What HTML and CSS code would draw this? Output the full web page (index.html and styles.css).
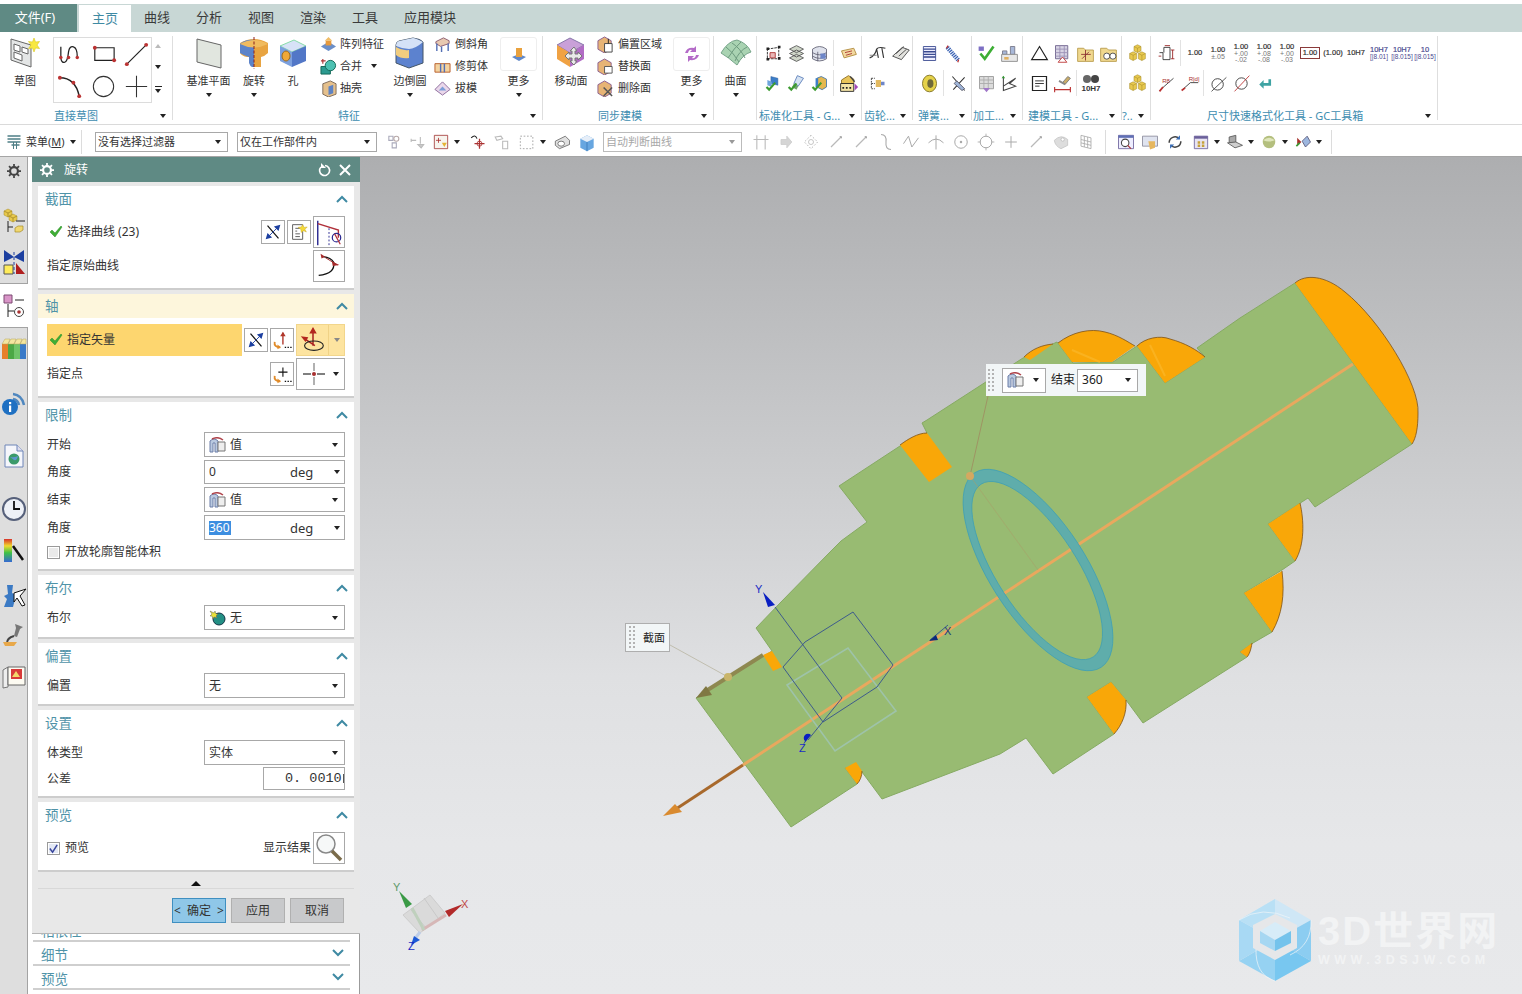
FILE: index.html
```html
<!DOCTYPE html>
<html lang="zh-CN">
<head>
<meta charset="utf-8">
<title>旋转</title>
<link rel="stylesheet" href="styles.css">
</head>
<body>
<svg class="sprite" aria-hidden="true">
<defs>
<symbol id="up" viewBox="0 0 12 8"><path d="M1 7l5-5 5 5" fill="none" stroke="#3f8aa3" stroke-width="2"/></symbol>
<symbol id="down" viewBox="0 0 12 8"><path d="M1 1l5 5 5-5" fill="none" stroke="#3f8aa3" stroke-width="2"/></symbol>
<symbol id="check" viewBox="0 0 14 14"><path d="M1 7l2-2 3 3 6-7 1 1-7 10z" fill="#3fae35" stroke="#2b8c28" stroke-width=".5"/></symbol>
<symbol id="val" viewBox="0 0 18 16"><path d="M1 4q4-4 8 0v11H6V6H4v9H1z" fill="#b9c9e0" stroke="#6c7fa8"/><path d="M9 5h7v9H9z" fill="#eee" stroke="#777"/><path d="M3 2q6-3 11 1" fill="none" stroke="#b0454d" stroke-width="1.5"/></symbol>
<symbol id="rev" viewBox="0 0 24 24"><path d="M6 5l12 14" stroke="#111" stroke-width="1.3"/><path d="M8 16l8-8" stroke="#1c3fa0"/><path d="M20 4l-7 2 5 5zM4 20l7-2-5-5z" fill="#1c3fa0"/></symbol>
<symbol id="sel-tool" viewBox="0 0 24 24"><path d="M5 4h11v16H5z" fill="#fff" stroke="#555"/><path d="M8 8h5M8 11h2M8 14h5M8 17h5" stroke="#555"/><path d="M16 4l1.500 3 3.500-.5-2.500 2.500 1.500 3-3-1.500-2.500 2-.5-3.500-3-2 3.500-.5z" fill="#f4d93a" stroke="#c5a820" stroke-width=".5"/></symbol>
<symbol id="sec-curve" viewBox="0 0 32 32"><path d="M4 4v26" stroke="#27268f" stroke-width="1.5"/><path d="M4 7l22 7v8" fill="none" stroke="#b0303a" stroke-width="1.500"/><path d="M16 12v18" stroke="#27268f" stroke-dasharray="2 2"/><circle cx="24" cy="22" r="4.500" fill="none" stroke="#27268f" stroke-width="1.300"/><path d="M22 18l6 11" stroke="#b0303a" stroke-width="1.300"/></symbol>
<symbol id="orig-curve" viewBox="0 0 32 32"><path d="M5 26q18-2 16-14Q18 7 10 6" fill="none" stroke="#111" stroke-width="1.400"/><path d="M7 3l5 3-4 2zM19 11l8 4-7 1z" fill="#a62a2a"/><path d="M12 7l13 8" stroke="#a62a2a"/></symbol>
<symbol id="vec-infer" viewBox="0 0 24 24"><path d="M13 4v13" stroke="#b0362a" stroke-width="1.500"/><path d="M10 8l3-5 3 5z" fill="#b0362a"/><path d="M4 14q-1 6 6 6" fill="none" stroke="#e08a28" stroke-width="2"/><path d="M7 17l4 3-4 2z" fill="#e08a28"/><path d="M15 20h1.500M18 20h1.500M21 20h1.500" stroke="#111" stroke-width="1.500"/></symbol>
<symbol id="pt-infer" viewBox="0 0 24 24"><path d="M13 5v10M8 10h10" stroke="#111" stroke-width="1.200"/><path d="M4 14q-1 6 6 6" fill="none" stroke="#e08a28" stroke-width="2"/><path d="M7 17l4 3-4 2z" fill="#e08a28"/><path d="M15 20h1.500M18 20h1.500M21 20h1.500" stroke="#111" stroke-width="1.500"/></symbol>
<symbol id="vec" viewBox="0 0 32 32"><path d="M16 4v18M6 14l12 8" stroke="#a81f1f" stroke-width="1.600"/><path d="M12 9l4-7 4 7zM3 12l8 1-3 5z" fill="#b3261e"/><ellipse cx="17" cy="22" rx="10" ry="5" fill="none" stroke="#222" stroke-width="1.200"/></symbol>
<symbol id="point" viewBox="0 0 30 24"><path d="M15 1v8M15 15v8" stroke="#888" stroke-width="1.300"/><path d="M4 12h8M18 12h8" stroke="#555" stroke-width="1.300"/><circle cx="15" cy="12" r="2" fill="#a83030"/></symbol>
<symbol id="boolnone" viewBox="0 0 18 16"><circle cx="10" cy="9" r="6" fill="#238f84" stroke="#134"/><path d="M1 1l4 2 1-2 1 3 2 0-2 2 1 2-3-1-1 2-1-3-2 0 2-2z" fill="#e8e13a" stroke="#665" stroke-width=".5"/></symbol>
<symbol id="mag" viewBox="0 0 30 30"><circle cx="12" cy="11" r="9" fill="#f6f8f8" stroke="#888" stroke-width="1.500"/><path d="M18 18l9 9" stroke="#7a6b4a" stroke-width="3.500"/></symbol>
<symbol id="gear" viewBox="0 0 16 16"><circle cx="8" cy="8" r="4.500" fill="none" stroke="currentColor" stroke-width="2.500"/><path d="M8 0v3M8 13v3M0 8h3M13 8h3M2.300 2.300l2 2M11.700 11.700l2 2M13.700 2.300l-2 2M4.300 11.700l-2 2" stroke="currentColor" stroke-width="2"/></symbol>
<symbol id="ycube" viewBox="0 0 24 24"><g fill="#e8c94e" stroke="#a68c2a" stroke-width=".6"><path d="M8 4l4-2 4 2v5l-4 2-4-2z"/><path d="M3 12l4-2 4 2v6l-4 2-4-2z"/><path d="M13 12l4-2 4 2v6l-4 2-4-2z"/></g><path d="M8 4l4 2 4-2M12 6v5M3 12l4 2 4-2M7 14v6M13 12l4 2 4-2M17 14v6" fill="none" stroke="#a68c2a" stroke-width=".6"/></symbol>
<symbol id="dcheck" viewBox="0 0 24 24"><path d="M9 4l8 2v8l-8-2z" fill="#3c7ec8" stroke="#2b5a96" stroke-width=".5"/><path d="M5 8l5 2v6l-5-2z" fill="#6ea4dc"/><path d="M4 16l3 3 7-8" fill="none" stroke="#3c9b30" stroke-width="2.500"/></symbol>
<symbol id="gray1" viewBox="0 0 24 24"><path d="M7 5h5v5H7zM11 13h5v6h-5z" fill="none" stroke="#aab" stroke-width="1.300"/><circle cx="16" cy="8" r="3" fill="none" stroke="#b7a8a8" stroke-width="1.300"/></symbol>
<symbol id="graytool" viewBox="0 0 24 24"><path d="M6 18L18 6" stroke="#b9b9b9" stroke-width="1.400"/><path d="M16 5l3 0 0 3z" fill="#9a9a9a"/></symbol>
</defs>
</svg>

<div class="tabs">
  <div class="tab-file">文件(F)</div>
  <div class="tab active">主页</div>
  <div class="tab">曲线</div>
  <div class="tab">分析</div>
  <div class="tab">视图</div>
  <div class="tab">渲染</div>
  <div class="tab">工具</div>
  <div class="tab">应用模块</div>
</div>

<div class="ribbon">
  <section class="group g1">
    <div class="gc">
      <div class="big sk"><div class="ic"><svg width="32" height="32" viewBox="0 0 32 32"><path d="M2 2l20 6v22L2 23z" fill="#e4e6e6" stroke="#666"/><path d="M5 7l6 2v6l-6-2zM13 10l6 2v5l-6-2zM5 15l8 3v6l-8-3z" fill="#fff" stroke="#666"/><path d="M25 1l1.500 4 4-.5-2.500 3.500 2.500 3.500-4-.5-1.500 4-1.500-4-4 .5 2.500-3.500-2.500-3.500 4 .5z" fill="#f8e840" stroke="#d9c820" stroke-width=".6"/></svg></div><span>草图</span></div>
      <div class="skbox">
        <svg class="skt" viewBox="0 0 30 30"><path d="M5 7v12q1 5 4 4t4-11q1-6 5-5t4 10" fill="none" stroke="#222" stroke-width="1.300"/><circle cx="5" cy="18" r="1.800" fill="#b33"/><circle cx="13" cy="18" r="1.800" fill="#b33"/><circle cx="22" cy="18" r="1.800" fill="#b33"/></svg>
        <svg class="skt" viewBox="0 0 30 30"><path d="M6 8h20v13H6z" fill="none" stroke="#222" stroke-width="1.200"/><circle cx="6" cy="8" r="2" fill="#b33"/><circle cx="26" cy="21" r="2" fill="#b33"/></svg>
        <svg class="skt" viewBox="0 0 30 30"><path d="M5 25L25 5" stroke="#222" stroke-width="1.200"/><circle cx="5" cy="25" r="2" fill="#b33"/><circle cx="25" cy="5" r="2" fill="#b33"/></svg>
        <svg class="skt" viewBox="0 0 30 30"><path d="M4 6q16 0 20 19" fill="none" stroke="#222" stroke-width="1.500"/><circle cx="4" cy="6" r="2" fill="#b33"/><circle cx="18" cy="11" r="2" fill="#b33"/><circle cx="24" cy="25" r="2" fill="#b33"/></svg>
        <svg class="skt" viewBox="0 0 30 30"><circle cx="15" cy="15" r="10.500" fill="none" stroke="#333" stroke-width="1.100"/></svg>
        <svg class="skt" viewBox="0 0 30 30"><path d="M15 4v22M4 15h22" stroke="#333" stroke-width="1.100"/></svg>
      </div>
      <div class="scr"><i class="tri-up grey"></i><i class="caret"></i><i class="caret lined"></i></div>
    </div>
    <div class="gl"><span>直接草图</span><i class="caret"></i></div>
  </section>

  <section class="group g2">
    <div class="gc">
      <div class="big w47"><div class="ic"><svg width="30" height="32" viewBox="0 0 30 32"><path d="M3 2l24 6v23L3 25z" fill="#e1e6df" stroke="#666"/></svg></div><span>基准平面</span><i class="caret"></i></div>
      <div class="big w44"><div class="ic"><svg width="30" height="32" viewBox="0 0 30 32"><path d="M1 6q14-8 28 0v10q-3 3-7 4v10h-8V20h-6q-5-1-7-4z" fill="#e8a441"/><path d="M1 7q6-5 14-4v27h-2q-2-1-3-4V20q-6-2-9-4z" fill="#5c83c9"/><path d="M1 7q14-8 28 0-14 7-28 0z" fill="#f0bb5f"/><path d="M15 0v32" stroke="#8b1f1f" stroke-dasharray="3 1.500"/></svg></div><span>旋转</span><i class="caret"></i></div>
      <div class="big w34"><div class="ic"><svg width="30" height="30" viewBox="0 0 30 30"><path d="M2 8l14-6 12 6-14 6z" fill="#d7e2f7" stroke="#8da"/><path d="M2 8v15l12 6V14z" fill="#7ca0de"/><path d="M28 8v15l-14 6V14z" fill="#5277c7"/><ellipse cx="8" cy="18" rx="4" ry="5" fill="#f0a838" stroke="#9b6a1e"/></svg></div><span>孔</span></div>
      <div class="lst l1">
        <div class="li"><svg class="s" viewBox="0 0 18 18"><path d="M1 11l8-5 8 5-8 5z" fill="#6b8fc9"/><path d="M6 5h6v5H6z" fill="#e79a3c"/><path d="M9 1l4 4H5z" fill="#f0bd68"/></svg><span>阵列特征</span></div>
        <div class="li"><svg class="s" viewBox="0 0 18 18"><path d="M1 9h10v8H1z" fill="#2b9a90" stroke="#165"/><circle cx="11" cy="8" r="5.500" fill="#4cc1b2" stroke="#165"/><path d="M3 1v5M1 3h5" stroke="#a33" stroke-width="1.200"/></svg><span>合并</span><i class="caret ml6"></i></div>
        <div class="li"><svg class="s" viewBox="0 0 18 18"><path d="M3 4l8-3 6 3v11l-8 3-6-3z" fill="#e5c08c" stroke="#7c6a5a"/><path d="M9 7l5-2v9l-5 2z" fill="#5e83c3"/></svg><span>抽壳</span></div>
      </div>
      <div class="big w36"><div class="ic"><svg width="32" height="32" viewBox="0 0 32 32"><path d="M2 8q0-3 3-4L19 1q8 1 10 4v21l-14 5L2 26z" fill="#5c82cf" stroke="#456"/><path d="M2 9q7 3 13 3t14-7q-8-4-10-4L5 4Q2 5 2 9z" fill="#d5e2f7"/><path d="M2 10q6 4 13 3v8q-8 1-13-3z" fill="#f1cd7f"/></svg></div><span>边倒圆</span><i class="caret"></i></div>
      <div class="lst l2">
        <div class="li"><svg class="s" viewBox="0 0 18 18"><path d="M2 6l8-4 6 3v3l-9 3-5-3z" fill="#e8c9b0" stroke="#8b5b6f"/><path d="M3 8v8M15 8v8M8 11v6" stroke="#5470b5" stroke-width="1.500"/></svg><span>倒斜角</span></div>
        <div class="li"><svg class="s" viewBox="0 0 18 18"><path d="M1 6h16v9H1z" fill="#f3d3a0" stroke="#b85e2a"/><path d="M7 6v9M11 6v9" stroke="#5470b5" stroke-width="1.500"/></svg><span>修剪体</span></div>
        <div class="li"><svg class="s" viewBox="0 0 18 18"><path d="M9 2l8 8-8 6-8-6z" fill="#ead7ea" stroke="#8b6a9c"/><path d="M9 7l4 4H5z" fill="#7d9ed8"/></svg><span>拔模</span></div>
      </div>
      <div class="big w37 more"><div class="ic"><div class="morebox"><svg width="20" height="20" viewBox="0 0 20 20"><path d="M3 13l7-3 7 3-7 4z" fill="#6289c8"/><path d="M7 4h6v9H7z" fill="#e9a13d"/></svg></div></div><span>更多</span><i class="caret"></i></div>
    </div>
    <div class="gl"><span>特征</span><i class="caret"></i></div>
  </section>

  <section class="group g3">
    <div class="gc">
      <div class="big w50"><div class="ic"><svg width="34" height="34" viewBox="0 0 34 34"><path d="M3 9l13-7 14 7-14 8z" fill="#c9a0d8" stroke="#87a"/><path d="M3 9v14l13 8V17z" fill="#f0a243"/><path d="M30 9v14l-14 8V17z" fill="#b26cc5"/><path d="M20 11l3 4h-2v3h3v-2l4 4-4 4v-2h-3v3h2l-3 4-4-4h2v-3h-3v2l-4-4 4-4v2h3v-3h-2z" fill="#e9e9e9" stroke="#777"/></svg></div><span>移动面</span></div>
      <div class="lst l3">
        <div class="li"><svg class="s" viewBox="0 0 18 18"><path d="M1 5l7-4 7 4v9l-7 4-7-4z" fill="#e7b475" stroke="#8a5f8f"/><path d="M8 8h8v9H8z" fill="#fff" stroke="#444"/><path d="M12 8V3" stroke="#222"/></svg><span>偏置区域</span></div>
        <div class="li"><svg class="s" viewBox="0 0 18 18"><path d="M1 5l7-4 7 4v9l-7 4-7-4z" fill="#e7b475" stroke="#8a5f8f"/><path d="M8 9h8v7H8z" fill="#fff" stroke="#555"/></svg><span>替换面</span></div>
        <div class="li"><svg class="s" viewBox="0 0 18 18"><path d="M1 5l7-4 7 4v9l-7 4-7-4z" fill="#e7b475" stroke="#8a5f8f"/><path d="M7 8l9 9M16 8l-9 9" stroke="#555" stroke-width="1.600"/></svg><span>删除面</span></div>
      </div>
      <div class="big w37"><div class="ic"><div class="morebox"><svg width="20" height="20" viewBox="0 0 20 20"><path d="M3 9q2-6 9-5l2-2v6H8l2-2q-3-1-4 3zM17 11q-2 6-9 5l-2 2v-6h6l-2 2q3 1 4-3z" fill="#b46bc8"/></svg></div></div><span>更多</span><i class="caret"></i></div>
    </div>
    <div class="gl"><span>同步建模</span><i class="caret"></i></div>
  </section>

  <section class="group g4">
    <div class="gc"><div class="big w43"><div class="ic"><svg width="32" height="28" viewBox="0 0 32 28"><path d="M1 14q7-12 16-13 10 3 14 12-8 2-14 13Q8 18 1 14z" fill="#a9d3b2" stroke="#77a58a"/><path d="M6 8q7 5 13 15M12 4q8 5 13 15M21 3Q14 9 8 19M27 8q-8 4-12 14" fill="none" stroke="#6d9a7e"/></svg></div><span>曲面</span><i class="caret"></i></div></div>
  </section>

  <section class="group g5">
    <div class="gc">
      <div class="mini">
        <div class="mr"><div class="c"><svg class="i" viewBox="0 0 24 24"><path d="M5 7l13-2v13H5z" fill="none" stroke="#222" stroke-dasharray="3 1"/><path d="M8 11h6v6H8z" fill="#e9b8b8" stroke="#a33"/><path d="M4 5h3v3H4zM17 3h3v3h-3zM4 17h3v3H4zM17 16h3v3h-3z" fill="#222"/></svg></div><div class="c"><svg class="i" viewBox="0 0 24 24"><path d="M4 7l8-4 8 4-8 4zM4 12l8-4 8 4-8 4zM4 17l8-4 8 4-8 4z" fill="#cfd6c8" stroke="#555"/></svg></div><div class="c"><svg class="i" viewBox="0 0 24 24"><path d="M4 7q8-6 16 0v11q-8 5-16 0z" fill="#dfe2ec" stroke="#667"/><path d="M4 11q8 5 16 0M4 15q8 5 16 0M10 10v11" stroke="#667" fill="none"/><path d="M13 12h6v6h-6z" fill="#6d86c9"/></svg></div><i class="sep"></i><div class="c"><svg class="i" viewBox="0 0 24 24"><path d="M4 9l14-3 3 7-14 4z" fill="#f2d8a0" stroke="#b08a3a"/><path d="M8 11l8-2M9 14l7-2" stroke="#a33"/></svg></div></div>
        <div class="mr"><div class="c"><svg class="i"><use href="#dcheck"/></svg></div><div class="c"><svg class="i" viewBox="0 0 24 24"><path d="M13 3l7 3-6 9-5-3z" fill="#d5e2f2" stroke="#5b7fb9"/><path d="M9 12l5 3-2 4-5-3z" fill="#6fa36e"/><path d="M3 16l3 3 6-7" fill="none" stroke="#3c9b30" stroke-width="2.500"/></svg></div><div class="c"><svg class="i" viewBox="0 0 24 24"><path d="M9 6l5-2 6 3v9l-5 3-6-3z" fill="#e5b84f" stroke="#47a"/><path d="M9 6v10" stroke="#3c7ec8" stroke-width="3"/><path d="M4 16l3 3 7-8" fill="none" stroke="#3c9b30" stroke-width="2.500"/></svg></div><i class="sep"></i><div class="c"><svg class="i" viewBox="0 0 24 24"><path d="M4 8l8-5 6 4v5H4z" fill="#e8c45a" stroke="#8a6a1e"/><path d="M3 12h15v9H3z" fill="#f4e4a6" stroke="#222"/><path d="M5 16h2v2H5zM9 16h2v2H9zM13 16h2v2h-2z" fill="#222"/><path d="M19 12l4 4-4 4z" fill="#a447b8"/><path d="M14 4l5 6" stroke="#444" stroke-width="1.500"/></svg></div></div>
      </div>
    </div>
    <div class="gl"><span>标准化工具 - G...</span><i class="caret"></i></div>
  </section>

  <section class="group g6">
    <div class="gc">
      <div class="mini">
        <div class="mr"><div class="c"><svg class="i" viewBox="0 0 24 24"><path d="M3 17q6-2 8-10 2-3 10-1M11 7l2 10M17 6l2 11" fill="none" stroke="#333" stroke-width="1.300"/><path d="M3 14h8" stroke="#777"/></svg></div><div class="c"><svg class="i" viewBox="0 0 24 24"><path d="M3 15L14 5l8 3-9 11z" fill="#e3e3df" stroke="#444"/><path d="M7 12l9-8M10 15l9-8" stroke="#444"/></svg></div></div>
        <div class="mr"><div class="c"><svg class="i" viewBox="0 0 24 24"><path d="M5 6h4M5 12h4M5 18h4M5 6v12" stroke="#333" stroke-dasharray="2 1"/><path d="M10 8h6v8h-6z" fill="#e2b960"/><path d="M16 10h4v4h-4z" fill="#6d86c9"/></svg></div></div>
      </div>
    </div>
    <div class="gl"><span>齿轮...</span><i class="caret"></i></div>
  </section>

  <section class="group g7">
    <div class="gc">
      <div class="mini">
        <div class="mr"><div class="c"><svg class="i" viewBox="0 0 24 24"><path d="M5 4h14v16H5z" fill="#eef" stroke="#3a4a90"/><path d="M5 7h14M5 10h14M5 13h14M5 16h14" stroke="#3a4a90" stroke-width="1.500"/></svg></div><div class="c"><svg class="i" viewBox="0 0 24 24"><path d="M6 5l13 15" stroke="#3a63b5" stroke-width="5" stroke-dasharray="1.500 1"/><path d="M5 6l2-3M19 19l-1 3" stroke="#b33" stroke-width="1.500"/></svg></div></div>
        <div class="mr"><div class="c"><svg class="i" viewBox="0 0 24 24"><ellipse cx="12" cy="12" rx="8" ry="9.500" fill="#e5d24a" stroke="#7c6d20"/><ellipse cx="13" cy="12" rx="3.500" ry="5" fill="#6f6a3a"/></svg></div><i class="sep"></i><div class="c"><svg class="i" viewBox="0 0 24 24"><path d="M5 4l14 16M19 5L6 19" stroke="#333" stroke-width="1.200"/><path d="M10 9l9 9-3 2-9-8z" fill="#9fb5d8" stroke="#556"/></svg></div></div>
      </div>
    </div>
    <div class="gl"><span>弹簧...</span><i class="caret"></i></div>
  </section>

  <section class="group g8">
    <div class="gc">
      <div class="mini">
        <div class="mr"><div class="c"><svg class="i" viewBox="0 0 24 24"><path d="M3 4h6v5H3z" fill="#7d6fc4"/><path d="M5 12l5 6 10-14" fill="none" stroke="#3dae35" stroke-width="3"/></svg></div><div class="c"><svg class="i" viewBox="0 0 24 24"><path d="M4 9h5v4H4zM13 4h5v9h-5z" fill="#a8b8d8" stroke="#778"/><path d="M3 13h18v8H3z" fill="#e8e8e8" stroke="#888"/><path d="M6 16h5v3H6z" fill="#e0b060"/></svg></div></div>
        <div class="mr"><div class="c"><svg class="i" viewBox="0 0 24 24"><path d="M4 4h16v14H4z" fill="#dcdcdc" stroke="#999"/><path d="M4 8h16M4 12h16M9 4v14M14 4v14" stroke="#aaa"/><path d="M12 22l-4-5h8z" fill="#a077c8"/></svg></div><div class="c"><svg class="i" viewBox="0 0 24 24"><path d="M5 4v16l14-5-7-3 7-6-14 9" fill="none" stroke="#444" stroke-width="1.200"/><path d="M3 6l2-3 2 3" fill="#393"/></svg></div></div>
      </div>
    </div>
    <div class="gl"><span>加工...</span><i class="caret"></i></div>
  </section>

  <section class="group g9">
    <div class="gc">
      <div class="mini">
        <div class="mr"><div class="c"><svg class="i" viewBox="0 0 24 24"><path d="M12 4l9 15H3z" fill="none" stroke="#222" stroke-width="1.300"/></svg></div><div class="c"><svg class="i" viewBox="0 0 24 24"><path d="M4 3h14v15H4z" fill="#d8d4e4" stroke="#6a5f8a"/><path d="M4 7h14M4 11h14M4 15h14M9 3v15M14 3v15" stroke="#9a90b5"/><path d="M12 16l5 6H7z" fill="#fff" stroke="#b33"/></svg></div><div class="c"><svg class="i" viewBox="0 0 24 24"><path d="M3 6h7l2 2h9v13H3z" fill="#f0d88e" stroke="#b79a4a"/><path d="M12 8v12M7 13h11M8 18l8-8" stroke="#8a3030"/></svg></div><div class="c"><svg class="i" viewBox="0 0 24 24"><path d="M3 6h7l2 2h9v13H3z" fill="#f0d88e" stroke="#b79a4a"/><circle cx="10" cy="15" r="3.500" fill="#fff" stroke="#444"/><circle cx="17" cy="15" r="3.500" fill="#fff" stroke="#444"/></svg></div></div>
        <div class="mr"><div class="c"><svg class="i" viewBox="0 0 24 24"><path d="M4 4h16v16H4z" fill="#fff" stroke="#222" stroke-width="1.400"/><path d="M7 9h10M7 12h10M7 15h5" stroke="#222"/></svg></div><div class="c"><svg class="i" viewBox="0 0 24 24"><path d="M12 11l6-7 3 2-6 7z" fill="#c9ac68" stroke="#777"/><path d="M8 9l7 4" stroke="#888" stroke-width="2"/><path d="M3 19h18M3 16v6M21 16v6" stroke="#b33" stroke-width="1.300"/></svg></div><i class="sep"></i><div class="c col"><svg class="tiny" viewBox="0 0 18 10"><circle cx="5" cy="5" r="4" fill="#666"/><circle cx="13" cy="5" r="4" fill="#444"/></svg><b class="t10h7">10H7</b></div></div>
      </div>
    </div>
    <div class="gl"><span>建模工具 - G...</span><i class="caret"></i></div>
  </section>

  <section class="group g10">
    <div class="gc"><div class="mini"><div class="mr"><div class="c"><svg class="i"><use href="#ycube"/></svg></div></div><div class="mr"><div class="c"><svg class="i"><use href="#ycube"/></svg></div></div></div></div>
    <div class="gl"><span>?..</span><i class="caret"></i></div>
  </section>

  <section class="group g11">
    <div class="gc">
      <div class="mini">
        <div class="mr">
          <div class="c"><svg class="i" viewBox="0 0 24 24"><path d="M9 11V5h7v14H8v-8H4" fill="none" stroke="#333"/><path d="M19 8v10M17 8h4M17 18h4M10 3h6M3 15h3" stroke="#922" fill="none"/></svg></div><i class="sep"></i>
          <div class="c"><span class="dm">1.00</span></div>
          <div class="c"><span class="dm">1.00<small>±.05</small></span></div>
          <div class="c"><span class="dm">1.00<small>+.00<br>-.02</small></span></div>
          <div class="c"><span class="dm">1.00<small>+.08<br>-.08</small></span></div>
          <div class="c"><span class="dm">1.00<small>+.00<br>-.03</small></span></div>
          <div class="c"><span class="dm boxed">1.00</span></div>
          <div class="c"><span class="dm">(1.00)</span></div>
          <div class="c"><span class="dm">10H7</span></div>
          <div class="c"><span class="dm bl">10H7<small>[|8.01]</small></span></div>
          <div class="c"><span class="dm bl">10H7<small>[|8.015]</small></span></div>
          <div class="c"><span class="dm bl">10<small>[|8.015]</small></span></div>
        </div>
        <div class="mr">
          <div class="c"><svg class="i" viewBox="0 0 24 24"><path d="M4 20L20 6" stroke="#333"/><path d="M4 21l4-5" stroke="#b33" stroke-width="2"/><text x="7" y="11" class="ictx">R8</text></svg></div>
          <div class="c"><svg class="i" viewBox="0 0 24 24"><path d="M4 19L13 11h9" fill="none" stroke="#333"/><path d="M3 20l4-3" stroke="#b33" stroke-width="2"/><text x="11" y="9" class="ictx">R|d|</text></svg></div><i class="sep"></i>
          <div class="c"><svg class="i" viewBox="0 0 24 24"><circle cx="11" cy="13" r="6.500" fill="none" stroke="#333"/><path d="M4 21L21 5" stroke="#444"/></svg></div>
          <div class="c"><svg class="i" viewBox="0 0 24 24"><circle cx="12" cy="12" r="6.500" fill="none" stroke="#333"/><path d="M4 21L21 3" stroke="#b33"/></svg></div>
          <div class="c"><svg class="i" viewBox="0 0 24 24"><path d="M18 7v6H9" fill="none" stroke="#3fa3a3" stroke-width="3"/><path d="M11 8l-5 5 5 5z" fill="#3fa3a3"/></svg></div>
        </div>
      </div>
    </div>
    <div class="gl"><span>尺寸快速格式化工具 - GC工具箱</span><i class="caret"></i></div>
  </section>
  <div class="ribbon-rest"></div>
</div>

<div class="toolbar">
  <div class="menu"><svg class="mi" viewBox="0 0 16 16"><path d="M1 2h13M1 5h13M1 8h13M5 11h8" stroke="#4f7f86" stroke-width="1.500"/><path d="M7 8v7M10 8v7" stroke="#4f7f86"/></svg><span>菜单(<u>M</u>)</span><i class="caret"></i></div>
  <i class="tsep"></i>
  <div class="tsel w133"><span>没有选择过滤器</span><i class="caret"></i></div>
  <div class="tsel w140"><span>仅在工作部件内</span><i class="caret"></i></div>
  <div class="t ml4"><svg class="tic"><use href="#gray1"/></svg></div>
  <div class="t"><svg class="tic" viewBox="0 0 24 24"><path d="M5 10h6M5 8v4M16 6v8M13 15h7l-3 4z" fill="#c9c9c9" stroke="#bbb" stroke-width="1.300"/></svg></div>
  <div class="t"><svg class="tic" viewBox="0 0 24 24"><path d="M4 4h16v16H4z" fill="#f7f4ee" stroke="#a53a3a"/><path d="M9 7v6M6 10h6" stroke="#a33"/><path d="M13 13h6l-3 5z" fill="#e5b335"/></svg></div><i class="tc"><i class="caret"></i></i>
  <div class="t ml4"><svg class="tic" viewBox="0 0 24 24"><path d="M5 7q5-5 7 1" fill="none" stroke="#222" stroke-width="1.300"/><path d="M15 8v12M9 14h12" stroke="#a33" stroke-width="1.500"/><circle cx="15" cy="14" r="3" fill="none" stroke="#a33"/></svg></div>
  <div class="t"><svg class="tic" viewBox="0 0 24 24"><path d="M5 6l7-1 2 3-7 2zM14 11h6v9h-6z" fill="none" stroke="#bbb" stroke-width="1.300"/></svg></div>
  <div class="t ml2"><svg class="tic" viewBox="0 0 24 24"><path d="M4 5h15v15H4z" fill="none" stroke="#999" stroke-dasharray="2 2"/></svg></div><i class="tc"><i class="caret"></i></i>
  <div class="t ml3"><svg class="tic" viewBox="0 0 24 24"><path d="M4 11l12-6 5 5v5L9 20l-5-4z" fill="#e0e0e0" stroke="#666"/><ellipse cx="11" cy="14" rx="4" ry="3" fill="#fff" stroke="#666"/></svg></div>
  <div class="t ml1"><svg class="tic" viewBox="0 0 24 24"><path d="M4 8l8-4 8 4v11l-8 4-8-4z" fill="#67a6e0"/><path d="M4 8l8-4 8 4-8 4z" fill="#e6eef8"/><path d="M12 12v11" stroke="#3b78b8"/></svg></div>
  <div class="tsel w139 dis ml4"><span>自动判断曲线</span><i class="caret"></i></div>
  <div class="ts25 first"><svg class="tic" viewBox="0 0 24 24"><path d="M7 4v17M17 4v17M3 9h18" stroke="#bbb" stroke-width="1.300"/></svg></div>
  <div class="ts25"><svg class="tic" viewBox="0 0 24 24"><path d="M6 9h7V5l6 7-6 7v-4H6z" fill="#d5d5d5" stroke="#ccc"/></svg></div>
  <div class="ts25"><svg class="tic" viewBox="0 0 24 24"><path d="M12 4l-8 8 8 8 8-8z" fill="none" stroke="#aaa" stroke-dasharray="2 2"/><circle cx="12" cy="12" r="3" fill="none" stroke="#bbb"/></svg></div>
  <div class="ts25"><svg class="tic"><use href="#graytool"/></svg></div>
  <div class="ts25"><svg class="tic"><use href="#graytool"/></svg></div>
  <div class="ts25"><svg class="tic" viewBox="0 0 24 24"><path d="M6 3q7 0 6 9t6 9" fill="none" stroke="#aaa" stroke-width="1.300"/></svg></div>
  <div class="ts25"><svg class="tic" viewBox="0 0 24 24"><path d="M3 14l6-9 4 13 8-11" fill="none" stroke="#aaa" stroke-width="1.200"/></svg></div>
  <div class="ts25"><svg class="tic" viewBox="0 0 24 24"><path d="M12 4v17M3 13q9-9 18 0" fill="none" stroke="#aaa" stroke-width="1.200"/></svg></div>
  <div class="ts25"><svg class="tic" viewBox="0 0 24 24"><circle cx="12" cy="12" r="7.500" fill="none" stroke="#aaa" stroke-width="1.200"/><circle cx="12" cy="12" r="1.500" fill="#aaa"/></svg></div>
  <div class="ts25"><svg class="tic" viewBox="0 0 24 24"><circle cx="12" cy="12" r="7" fill="none" stroke="#aaa" stroke-width="1.200"/><path d="M12 2v4M12 18v4M2 12h4M18 12h4" stroke="#aaa"/></svg></div>
  <div class="ts25"><svg class="tic" viewBox="0 0 24 24"><path d="M12 5v14M5 12h14" stroke="#aaa" stroke-width="1.200"/></svg></div>
  <div class="ts25"><svg class="tic"><use href="#graytool"/></svg></div>
  <div class="ts25"><svg class="tic" viewBox="0 0 24 24"><path d="M4 10q8-8 16-1v7l-8 4q-7-3-8-10z" fill="#ddd" stroke="#c5c5c5"/><circle cx="14" cy="9" r="2" fill="#fff" stroke="#bbb"/></svg></div>
  <div class="ts25"><svg class="tic" viewBox="0 0 24 24"><path d="M6 4l12 3v13L6 17zM6 9l12 3M6 13l12 3M10 5v13M14 6v13" fill="none" stroke="#aaa"/></svg></div>
  <i class="tsep ml6"></i>
  <div class="t ml8"><svg class="tic" viewBox="0 0 24 24"><path d="M3 4h18v16H3z" fill="#eef" stroke="#6a5f9a"/><path d="M3 4h18v3H3z" fill="#5f6fb5"/><circle cx="11" cy="13" r="4.500" fill="#fff" stroke="#444" stroke-width="1.300"/><path d="M14 16l4 4" stroke="#a33" stroke-width="1.500"/></svg></div>
  <div class="t"><svg class="tic" viewBox="0 0 24 24"><path d="M3 5h18v12H3z" fill="#dfe3ef" stroke="#889"/><path d="M10 11l8 0v8l-6 2z" fill="#e6b760"/></svg></div>
  <div class="t ml1"><svg class="tic" viewBox="0 0 24 24"><path d="M5 13a7 7 0 0 1 12-5M19 11a7 7 0 0 1-12 5" fill="none" stroke="#444" stroke-width="1.800"/><path d="M18 4v5h-5z" fill="#3d70b8"/><path d="M6 20v-5h5z" fill="#3d70b8"/></svg></div>
  <div class="t ml2"><svg class="tic" viewBox="0 0 24 24"><path d="M4 5h16v15H4z" fill="#e8e4f2" stroke="#6a5f9a"/><path d="M4 5h16v3H4z" fill="#6a5f9a"/><path d="M8 11h3v3H8zM13 11h3v3h-3zM8 15h3v3H8zM13 15h3v3h-3z" fill="#c6a13a"/></svg></div><i class="tc"><i class="caret"></i></i>
  <div class="t ml2"><svg class="tic" viewBox="0 0 24 24"><path d="M5 6l8-2v9H5z" fill="#a9a9a9" stroke="#555"/><path d="M3 13l10-1 8 4-9 3z" fill="#cfcfcf" stroke="#555"/></svg></div><i class="tc"><i class="caret"></i></i>
  <div class="t ml2"><svg class="tic" viewBox="0 0 24 24"><circle cx="12" cy="12" r="7.500" fill="#b4bf7e"/><path d="M5 10q7-6 14 0-7 3-14 0z" fill="#dfe6bb"/></svg></div><i class="tc"><i class="caret"></i></i>
  <div class="t ml2"><svg class="tic" viewBox="0 0 24 24"><path d="M5 7l5 5-5 5z" fill="#a6302a"/><path d="M11 11l6-6 4 7-6 6z" fill="#9db6de" stroke="#557"/><path d="M4 17l4-4" stroke="#3a9b35" stroke-width="2"/></svg></div><i class="tc"><i class="caret"></i></i>
  <i class="tsep ml8"></i>
</div>

<div class="main">
  <nav class="rail">
    <div class="ri"><svg class="ri-gear"><use href="#gear"/></svg></div>
    <div class="ri"><svg class="ri-ic" viewBox="0 0 26 26"><path d="M3 4l4-2 4 2-4 2zM3 4v4l4 2V6zM11 4v4l-4 2V6zM8 9l4-2 4 2-4 2zM8 9v4l4 2v-4zM16 9v4l-4 2v-4z" fill="#e8c94e" stroke="#a68c2a" stroke-width=".5"/><path d="M7 14v11M7 20h5M15 14h9" stroke="#222"/><path d="M14 21l3-2 5 0 0 4-3 2h-5z" fill="#f0d770" stroke="#a68c2a" stroke-width=".7"/></svg></div>
    <div class="ri"><svg class="ri-ic" viewBox="0 0 26 26"><path d="M3 1l10 7 10-7v12l-10-5-10 5z" fill="#1c3fa0"/><path d="M13 3v22" stroke="#1c3fa0" stroke-dasharray="3 2"/><path d="M3 16h9v9H3z" fill="#ffec5a" stroke="#555"/><path d="M15 14l9 11h-9z" fill="#b01e1e"/></svg></div>
    <div class="ri on"><svg class="ri-ic" viewBox="0 0 26 26"><path d="M3 2h8v8H3z" fill="#d995c8" stroke="#7c4a72"/><path d="M7 11v13M7 18h6M14 7h9" stroke="#222"/><circle cx="18" cy="19" r="4.500" fill="none" stroke="#444"/><circle cx="18" cy="19" r="1.800" fill="#a33"/></svg></div>
    <div class="ri"><svg class="ri-ic" viewBox="0 0 26 26"><path d="M1 9h6v15H1z" fill="#e6802a"/><path d="M7 9h6v15H7z" fill="#4ba846"/><path d="M13 9h6v15h-6z" fill="#6fc46a"/><path d="M19 9h6v15h-6z" fill="#3a7ac8"/><path d="M1 9l3-5h5l-2 5zM7 9l3-5h5l-2 5zM13 9l3-5h5l-2 5zM19 9l3-5h3v5z" fill="#f3e6a0" stroke="#b7a55a" stroke-width=".5"/></svg></div>
    <div class="ri"><svg class="ri-ic" viewBox="0 0 26 26"><path d="M12 4q9 1 11 11M12 9q5 1 6 6" fill="none" stroke="#4f87bf" stroke-width="2.500"/><circle cx="9" cy="17" r="8" fill="#1f70c2"/><rect x="8" y="15.500" width="2.200" height="6.500" fill="#fff"/><rect x="8" y="12" width="2.200" height="2.200" fill="#fff"/></svg></div>
    <div class="ri"><svg class="ri-ic" viewBox="0 0 26 26"><path d="M4 2h12l6 6v16H4z" fill="#f5f6fb" stroke="#6f86b8"/><path d="M16 2v6h6" fill="#dde" stroke="#6f86b8"/><circle cx="13" cy="16" r="5.500" fill="#3a9a6a"/><path d="M9 14q4 1 8-1-1 5-4 4z" fill="#5d96cf"/></svg></div>
    <div class="ri"><svg class="ri-ic" viewBox="0 0 26 26"><circle cx="13" cy="13" r="11" fill="#eef1f7" stroke="#56607a" stroke-width="2"/><path d="M13 5v8h6" fill="none" stroke="#111" stroke-width="1.800"/></svg></div>
    <div class="ri"><svg class="ri-ic" viewBox="0 0 26 26"><defs><linearGradient id="spec" x1="0" y1="0" x2="0" y2="1"><stop offset="0" stop-color="#d8322a"/><stop offset=".3" stop-color="#f0d92e"/><stop offset=".6" stop-color="#3ec246"/><stop offset="1" stop-color="#3568d4"/></linearGradient></defs><rect x="3" y="1" width="8" height="23" fill="url(#spec)"/><path d="M12 8l10 14" stroke="#111" stroke-width="2.500"/></svg></div>
    <div class="ri"><svg class="ri-ic" viewBox="0 0 26 26"><path d="M6 1h6l-1 8 4 2-3 12H3l3-8-3-3 4-2z" fill="#3b7ac4"/><path d="M13 9l12-4-6 7 5 9-3 1-5-8-3 4z" fill="#fff" stroke="#111"/></svg></div>
    <div class="ri"><svg class="ri-ic" viewBox="0 0 26 26"><path d="M14 2l8 3-3 2-3 8-3-1 2-8z" fill="#777"/><path d="M13 14q-7 2-7 7" fill="none" stroke="#444" stroke-width="2"/><path d="M2 20h14l-3 4H4z" fill="#e8a84a"/></svg></div>
    <div class="ri"><svg class="ri-ic" viewBox="0 0 26 26"><path d="M2 6l5-3v20l-5 1z" fill="#eee" stroke="#777"/><path d="M7 3h17v18H7z" fill="#fdfbf2" stroke="#666"/><path d="M10 5h11v10H10z" fill="#d83a3a"/><path d="M15 7l4 6h-8z" fill="#f3d86a"/></svg></div>
  </nav>

  <aside class="panel">
    <div class="under"><span class="ut">相依性</span></div>
    <div class="under"><span class="ut">细节</span><svg class="chev cd"><use href="#down"/></svg></div>
    <div class="under"><span class="ut">预览</span><svg class="chev cd"><use href="#down"/></svg></div>

    <div class="dialog">
      <header class="dh"><svg class="dh-gear"><use href="#gear"/></svg><span class="dh-t">旋转</span><svg class="dh-b" viewBox="0 0 14 14"><path d="M3 4a5 5 0 1 0 4-1.500" fill="none" stroke="#fff" stroke-width="1.600"/><path d="M3 0v5h5" fill="#fff"/></svg><svg class="dh-b" viewBox="0 0 14 14"><path d="M2 2l10 10M12 2L2 12" stroke="#fff" stroke-width="2"/></svg></header>
      <div class="dbody">
        <section class="sec">
          <div class="sh"><span>截面</span><svg class="chev"><use href="#up"/></svg></div>
          <div class="sb">
            <div class="row r32"><svg class="chk"><use href="#check"/></svg><span class="lb">选择曲线 (23)</span><span class="sp"></span><span class="btn b24"><svg class="bi"><use href="#rev"/></svg></span><span class="btn b24 ml2"><svg class="bi"><use href="#sel-tool"/></svg></span><span class="btn b32 ml2"><svg class="bb"><use href="#sec-curve"/></svg></span></div>
            <div class="row r32 mt2"><span class="lb">指定原始曲线</span><span class="sp"></span><span class="btn b32"><svg class="bb"><use href="#orig-curve"/></svg></span></div>
          </div>
        </section>
        <section class="sec">
          <div class="sh act"><span>轴</span><svg class="chev"><use href="#up"/></svg></div>
          <div class="sb">
            <div class="row r32"><div class="hl"><svg class="chk"><use href="#check"/></svg><span class="lb">指定矢量</span></div><span class="sp"></span><span class="btn b24"><svg class="bi"><use href="#rev"/></svg></span><span class="btn b24 ml2"><svg class="bi"><use href="#vec-infer"/></svg></span><span class="btn-sel ml2"><span class="bs-m"><svg class="bb"><use href="#vec"/></svg></span><span class="bs-c"><i class="caret gr"></i></span></span></div>
            <div class="row r32 mt2"><span class="lb">指定点</span><span class="sp"></span><span class="btn b24"><svg class="bi"><use href="#pt-infer"/></svg></span><span class="btn b49 ml2"><svg class="bp"><use href="#point"/></svg><i class="caret"></i></span></div>
          </div>
        </section>
        <section class="sec pb8">
          <div class="sh"><span>限制</span><svg class="chev"><use href="#up"/></svg></div>
          <div class="sb">
            <div class="row r25"><span class="lb">开始</span><span class="sp"></span><div class="sel"><svg class="vi"><use href="#val"/></svg><span>值</span><i class="caret"></i></div></div>
            <div class="row r24 mt3"><span class="lb">角度</span><span class="sp"></span><div class="sel num"><span class="n">0</span><span class="u">deg</span><i class="caret"></i></div></div>
            <div class="row r25 mt3"><span class="lb">结束</span><span class="sp"></span><div class="sel"><svg class="vi"><use href="#val"/></svg><span>值</span><i class="caret"></i></div></div>
            <div class="row r25 mt3"><span class="lb">角度</span><span class="sp"></span><div class="sel num"><span class="n hi">360</span><span class="u">deg</span><i class="caret"></i></div></div>
            <div class="row r18 mt3"><i class="cb"></i><span class="lb">开放轮廓智能体积</span></div>
          </div>
        </section>
        <section class="sec pb9">
          <div class="sh"><span>布尔</span><svg class="chev"><use href="#up"/></svg></div>
          <div class="sb">
            <div class="row r25"><span class="lb">布尔</span><span class="sp"></span><div class="sel"><svg class="vi"><use href="#boolnone"/></svg><span>无</span><i class="caret"></i></div></div>
          </div>
        </section>
        <section class="sec">
          <div class="sh"><span>偏置</span><svg class="chev"><use href="#up"/></svg></div>
          <div class="sb">
            <div class="row r25"><span class="lb">偏置</span><span class="sp"></span><div class="sel"><span>无</span><i class="caret"></i></div></div>
          </div>
        </section>
        <section class="sec">
          <div class="sh"><span>设置</span><svg class="chev"><use href="#up"/></svg></div>
          <div class="sb">
            <div class="row r25"><span class="lb">体类型</span><span class="sp"></span><div class="sel"><span>实体</span><i class="caret"></i></div></div>
            <div class="row r23 mt2"><span class="lb">公差</span><span class="sp"></span><div class="tol"><span class="tolv">0. 0010</span></div></div>
          </div>
        </section>
        <section class="sec">
          <div class="sh"><span>预览</span><svg class="chev"><use href="#up"/></svg></div>
          <div class="sb">
            <div class="row r32"><i class="cb on"><svg viewBox="0 0 12 12"><path d="M2 6l3 4 5-8" fill="none" stroke="#38459c" stroke-width="1.600"/></svg></i><span class="lb">预览</span><span class="sp"></span><span class="lb">显示结果</span><span class="btn b32 ml2"><svg class="bb"><use href="#mag"/></svg></span></div>
          </div>
        </section>
        <div class="collapse"><i class="tri-up"></i></div>
        <div class="acts"><button class="pb ok">&lt; 确定 &gt;</button><button class="pb">应用</button><button class="pb">取消</button></div>
      </div>
    </div>
  </aside>

  <div class="viewport">
    <svg class="scene" viewBox="360 157 1162 837" width="1162" height="837">
      <polygon fill="#98bb72" stroke="#86aa63" stroke-width="1" points="696,698 772,651 756,628 780,603 830,552 841,541 867,522 839,486 900,446 927,433 922,423 927,420 1023,358 1057,342 1073,363 1113,362 1137,346 1165,383 1205,357 1197,348 1240,318 1295,283 1412,444 1315,507 1308,498 1268,524 1295,561 1282,570 1244,593 1272,632 1253,643 1240,652 1247,657 1143,723 1126,700 1111,682 1087,697 1114,734 1053,774 1026,738 1000,754 882,799 862,772 845,768 857,784 791,827"/>
      <g fill="#f9a708">
        <path d="M1295,283C1305,274 1325,275 1345,292C1380,320 1420,385 1418,413C1418,428 1416,438 1412,444Z" fill="#fca805"/>
        <path d="M1058,343C1072,332 1090,328 1105,332C1118,335 1128,342 1135,346L1112,362L1072,362Z"/>
        <path d="M1137,346C1145,338 1160,335 1170,339C1185,343 1197,350 1205,357L1165,383Z"/>
        <path d="M1024,357C1032,349 1042,345 1053,344L1030,360Z"/>
        <path d="M900,445C908,439 918,433 927,433L952,467L929,482Z"/>
        <path d="M763,655L772,651L782,667L773,671Z"/>
        <path d="M1268,524L1300,503C1304,520 1305,545 1295,561Z"/>
        <path d="M1244,593L1282,571C1285,595 1282,615 1272,632Z"/>
        <path d="M1240,652L1252,643C1251,650 1249,655 1247,657Z"/>
        <path d="M1087,697L1111,682L1126,700C1127,713 1122,725 1114,734Z"/>
        <path d="M845,768L856,762L862,771C862,776 860,781 857,784Z"/>
      </g>
      <path fill="none" stroke="#7d5216" stroke-width=".8" d="M1295,283C1305,274 1325,275 1345,292C1380,320 1420,385 1418,413C1418,428 1416,438 1412,444M1058,343C1072,332 1090,328 1105,332C1118,335 1128,342 1135,346M1137,346C1145,338 1160,335 1170,339C1185,343 1197,350 1205,357M1024,357C1032,349 1042,345 1053,344M900,445C908,439 918,433 927,433M1300,503C1304,520 1305,545 1295,561M1282,571C1285,595 1282,615 1272,632M1252,643C1251,650 1249,655 1247,657M1126,700C1127,713 1122,725 1114,734M862,771C862,776 860,781 857,784"/>
      <path d="M1072,350L1100,362M1150,345L1165,376" stroke="#fbb82a" stroke-width="2" opacity=".7"/>
      <line x1="1353" y1="364" x2="743" y2="765" stroke="#e9a85e" stroke-width="3"/>
      <line x1="743" y1="765" x2="676" y2="809" stroke="#a8692c" stroke-width="3"/>
      <path d="M663,816L675,804L682,812Z" fill="#d98a2f"/>
      <path fill="#5fadab" stroke="#3d9fb5" stroke-width=".7" fill-rule="evenodd" d="M-116,0a116,48 0 1,0 232,0a116,48 0 1,0 -232,0zM-103,1a103,40 0 1,0 206,0a103,40 0 1,0 -206,0z" transform="translate(1038,570) rotate(57)"/>
      <path d="M970,476L1038,570" stroke="#a9a06a" stroke-width=".7" opacity=".8"/>
      <path d="M970,476L988,396" stroke="#a08a60" stroke-width=".8"/>
      <circle cx="970" cy="476" r="4" fill="#d4a860"/>
      <path d="M670,645L728,677" stroke="#b9b5a2" stroke-width=".8"/>
      <path d="M763,655L706,691" stroke="#8e8850" stroke-width="4"/>
      <path d="M696,698L706,686L712,695Z" fill="#807843"/>
      <circle cx="728" cy="677" r="4" fill="#c9b56a"/>
      <polygon points="787,685 848,648 896,711 835,751" fill="none" stroke="#9ec3a9" stroke-width="1.600"/>
      <g fill="none" stroke="#33508f" stroke-width=".9">
        <path d="M775,607L842,698"/>
        <path d="M783,667L805,642L853,612L893,665L877,687L823,722Z"/>
        <path d="M842,698L808,740"/>
        <path d="M948,625L930,640"/>
      </g>
      <path d="M763,592L775,605L768,607Z" fill="#0a1fc2"/>
      <path d="M811,735a4,4 0 1,0 -6,6l-2,4z" fill="#0a1fc2"/>
      <path d="M929,641L936,635L938,640Z" fill="#0a2a7a"/>
      <text x="755" y="593" class="ax bl">Y</text>
      <text x="799" y="752" class="ax bl">Z</text>
      <text x="944" y="635" class="ax nv">X</text>
      <g>
        <polygon points="403,915 430,895 445,913 420,933" fill="#dadada" stroke="#cdcdcd"/>
        <path d="M424,898L438,918M411,910L426,928" stroke="#c9c9c9" fill="none"/>
        <path d="M422,930L446,915" stroke="#d6b7b7" stroke-width="3"/>
        <path d="M463,904L445,911L449,917Z" fill="#b22a2a"/>
        <path d="M412,908L424,930" stroke="#bfd0bd" stroke-width="3"/>
        <path d="M399,891L406,908L412,904Z" fill="#3a9a46"/>
        <path d="M420,932L414,940" stroke="#bdcde8" stroke-width="3"/>
        <path d="M411,945L414,936L420,940Z" fill="#1c5ad6"/>
        <text x="393" y="891" class="ax gr">Y</text>
        <text x="461" y="908" class="ax rd">X</text>
        <text x="408" y="950" class="ax bl">Z</text>
      </g>
      <g class="wm">
        <polygon points="1275,899 1311,920 1275,940 1239,920" fill="#cfe7f6"/>
        <polygon points="1311,920 1311,961 1275,940" fill="#8ccdf1"/>
        <polygon points="1311,961 1275,981 1275,940" fill="#78c7f0"/>
        <polygon points="1275,981 1239,961 1275,940" fill="#96d2f2"/>
        <polygon points="1239,961 1239,920 1275,940" fill="#a8d9f4"/>
        <polygon points="1239,920 1275,899 1275,940" fill="#b9e0f5"/>
        <path d="M1239,920Q1262,905 1290,918M1311,920Q1312,945 1290,955M1275,981Q1255,975 1256,948" fill="none" stroke="#f0f5f8" stroke-width=".7"/>
        <polygon points="1275,914 1297,925 1297,948 1275,960 1253,948 1253,925" fill="#e6e7e9"/>
        <polygon points="1275,922 1291,931 1275,940 1260,931" fill="#d7ecf8"/>
        <polygon points="1260,931 1275,940 1275,951 1260,943" fill="#a6d7f2"/>
        <polygon points="1291,931 1291,943 1275,951 1275,940" fill="#74c3ec"/>
      </g>
    </svg>
    <div class="wm-t"><div class="wm1">3D世界网</div><div class="wm2">WWW.3DSJW.COM</div></div>
    <div class="tag"><i class="grip"></i><span>截面</span></div>
    <div class="ctl"><i class="grip"></i><div class="cs c1"><svg class="vi"><use href="#val"/></svg><i class="caret"></i></div><span class="ctl-l">结束</span><div class="cs c2"><span>360</span><i class="caret"></i></div></div>
  </div>
</div>
</body>
</html>
```
FILE: styles.css
```css
* { box-sizing: border-box; }
html, body { margin: 0; padding: 0; }
body {
  width: 1522px; height: 994px; overflow: hidden; background: #fff;
  display: flex; flex-direction: column;
  font: 12px/16px "Noto Sans", "Noto Sans CJK SC", sans-serif; color: #333;
  padding-top: 4px;
}
i { font-style: normal; display: block; }
.sprite { position: absolute; width: 0; height: 0; }

/* carets */
.caret { width: 0; height: 0; border: 3.5px solid transparent; border-top: 4px solid #222; border-bottom: 0; flex: none; }
.caret.gr { border-top-color: #888; }
.caret.lined { position: relative; margin-top: 3px; }
.caret.lined::before { content: ""; position: absolute; left: -3.5px; top: -7px; width: 7px; height: 1px; background: #222; }
.tri-up { width: 0; height: 0; border: 5px solid transparent; border-bottom: 5px solid #111; border-top: 0; }
.tri-up.grey { border-width: 0 3.5px 4px; border-color: transparent transparent #bbb; }
.ml1 { margin-left: 1px; } .ml2 { margin-left: 2px; } .ml3 { margin-left: 3px; } .ml4 { margin-left: 4px; }
.ml6 { margin-left: 6px; } .ml8 { margin-left: 8px; }
.mt2 { margin-top: 2px; } .mt3 { margin-top: 3px; }

/* tabs */
.tabs { height: 28px; flex: none; background: #c8d7d5; display: flex; align-items: stretch; font-size: 13px; line-height: 26px; color: #3a3a3a; }
.tab-file { width: 77px; background: #5f8a84; color: #fff; text-align: center; padding-right: 7px; }
.tab { width: 52px; text-align: center; }
.tab.active { margin: 1px 0 0 2px; background: #fff; color: #3f8aa3; }
.tab:last-child { width: 78px; white-space: nowrap; }

/* ribbon */
.ribbon { height: 93px; flex: none; display: flex; border-bottom: 1px solid #dadada; }
.ribbon-rest { flex: 1; }
.group { position: relative; padding-top: 1px; display: flex; flex-direction: column; flex: none; }
.group::after { content: ""; position: absolute; right: 0; top: 4px; bottom: 4px; width: 1px; background: #dedede; }
.g1 { width: 173px; } .g2 { width: 370px; } .g3 { width: 171px; } .g4 { width: 43px; } .g5 { width: 105px; }
.g6 { width: 51px; } .g7 { width: 59px; } .g8 { width: 51px; } .g9 { width: 99px; } .g10 { width: 29px; } .g11 { width: 287px; }
.gc { height: 74px; display: flex; align-items: flex-start; flex: none; }
.gl { height: 17px; display: flex; align-items: center; position: relative; font-size: 11px; color: #3d8db0; white-space: nowrap; }
.gl > .caret { position: absolute; right: 7px; top: 7px; }
.g1 .gl { padding-left: 54px; }
.g2 .gl { padding-left: 165px; }
.g3 .gl { padding-left: 55px; }
.g5 .gl { padding-left: 2px; }
.g6 .gl { padding-left: 2px; }
.g7 .gl { padding-left: 5px; }
.g8 .gl { padding-left: 1px; }
.g9 .gl { padding-left: 5px; }
.g11 .gl { padding-left: 56px; }

.big { display: flex; flex-direction: column; align-items: center; font-size: 11px; line-height: 18px; color: #333; flex: none; white-space: nowrap; }
.big .ic { height: 39px; display: flex; align-items: center; justify-content: center; }
.big .caret { margin-top: 3px; }
.sk { width: 50px; }
.skbox { width: 99px; height: 66px; margin: 4px 0 0 3px; border: 1px solid #dcdcdc; display: grid; grid-template-columns: repeat(3, 33px); grid-auto-rows: 32px; align-items: center; justify-items: center; }
.skt { width: 29px; height: 29px; }
.scr { width: 21px; padding: 11px 13px 0 4px; display: flex; flex-direction: column; align-items: center; gap: 17px; }
.g2 .gc { padding-left: 12px; }
.w47 { width: 47px; } .w44 { width: 44px; } .w34 { width: 34px; } .w36 { width: 36px; } .w37 { width: 37px; } .w50 { width: 50px; } .w43 { width: 43px; }
.lst { display: flex; flex-direction: column; font-size: 11px; flex: none; white-space: nowrap; }
.li { height: 22px; display: flex; align-items: center; gap: 3px; color: #333; }
.s { width: 17px; height: 17px; flex: none; }
.l1 { width: 72px; margin-left: 10px; }
.l2 { width: 64px; margin-left: 6px; }
.l3 { width: 76px; margin-left: 1px; }
.l2 .li, .l3 .li { gap: 4px; }
.more { margin-left: 2px; }
.morebox { width: 37px; height: 34px; border: 1px solid #eee; border-radius: 3px; display: flex; align-items: center; justify-content: center; margin-top: 3px; }
.g3 .gc { padding-left: 3px; }
.mini { padding-top: 5px; display: flex; flex-direction: column; }
.mr { height: 30px; display: flex; align-items: center; }
.c { width: 23px; height: 30px; display: flex; align-items: center; justify-content: center; flex: none; }
.c.col { flex-direction: column; gap: 0; }
.i { width: 21px; height: 21px; }
.sep { width: 1px; height: 26px; margin: 0 2.500px; background: #e2e2e2; flex: none; }
.g5 .mini, .g7 .mini, .g9 .mini { padding-left: 4.500px; }
.g6 .mini, .g10 .mini { padding-left: 3.500px; }
.g8 .mini { padding-left: 2.500px; }
.g11 .mini { padding-left: 3.500px; }
.tiny { width: 18px; height: 10px; }
.t10h7 { font: bold 8px/9px "Liberation Sans", sans-serif; color: #333; }
.ictx { font: 7px "Liberation Sans", sans-serif; fill: #a33; }
.dm { font: 7.500px/8px "Liberation Sans", sans-serif; color: #333; text-align: center; white-space: nowrap; -webkit-text-stroke: .2px #333; }
.dm small { display: block; font: 7px/6.500px "Liberation Sans", sans-serif; color: #777; -webkit-text-stroke: 0; }
.dm.bl { color: #4a4a90; -webkit-text-stroke-color: #4a4a90; }
.dm.bl small { color: #4a4a90; font-size: 6.500px; }
.dm.boxed { border: 1px solid #8a3a3a; padding: 1px 2px; color: #333; line-height: 8px; }

/* toolbar */
.toolbar { height: 32px; flex: none; display: flex; align-items: center; border-bottom: 1px solid #a5a5a5; padding-top: 2px; font-size: 11px; white-space: nowrap; }
.menu { width: 81px; display: flex; align-items: center; padding-left: 6px; }
.mi { width: 17px; height: 16px; margin-right: 3px; flex: none; }
.menu .caret { margin-left: 5px; }
.tsep { width: 1px; height: 24px; background: #dcdcdc; flex: none; }
.tsel { height: 20px; border: 1px solid #a8a8a8; display: flex; align-items: center; justify-content: space-between; padding: 0 6px 0 2px; color: #333; flex: none; }
.w133 { width: 133px; margin-left: 13px; }
.w140 { width: 140px; margin-left: 9px; }
.w139 { width: 139px; }
.tsel.dis { color: #a8a8a8; border-color: #bbb; }
.tsel.dis .caret { border-top-color: #999; }
.t { width: 24px; height: 24px; display: flex; align-items: center; justify-content: center; flex: none; }
.ts25 { width: 25px; height: 24px; display: flex; align-items: center; justify-content: center; flex: none; }
.first { margin-left: 6.500px; }
.tic { width: 20px; height: 20px; }
.tc { width: 8px; display: flex; justify-content: center; flex: none; }

/* main */
.main { flex: 1; min-height: 0; display: flex; }
.rail { width: 28px; flex: none; background: #dedede; border-right: 1px solid #a3a3a3; display: flex; flex-direction: column; }
.ri { height: 42px; flex: none; display: flex; align-items: center; justify-content: center; }
.ri:nth-child(1) { height: 27px; }
.ri:nth-child(2) { margin-top: 15px; }
.ri.on { height: 45px; background: #fff; width: 28px; border-top: 1px solid #a3a3a3; border-bottom: 1px solid #a3a3a3; }
.ri:nth-child(5) { height: 40px; }
.ri:nth-child(6) { margin-top: 14px; }
.ri:nth-child(7), .ri:nth-child(8) { margin-top: 11px; }
.ri:nth-child(10) { margin-top: 6px; height: 38px; }
.ri:nth-child(11) { height: 38px; }
.ri:nth-child(12) { margin-top: 2px; }
.ri-ic { width: 26px; height: 26px; }
.ri-gear { width: 14px; height: 14px; color: #444; }

.panel { width: 332px; flex: none; position: relative; background: #fff; border-right: 1px solid #9b9b9b; display: flex; flex-direction: column; justify-content: flex-end; padding: 0 9px 4px 5px; }
.under { height: 24px; flex: none; display: flex; align-items: center; justify-content: space-between; border-bottom: 2px solid #cfcfcf; padding: 0 6px 0 8px; font-size: 13.500px; color: #4f93a8; }
.ut { margin-top: 4px; }
.chev { width: 12px; height: 8px; flex: none; }
.dialog { position: absolute; left: 4px; top: 0; width: 328px; height: 777px; background: #e8e8e8; display: flex; flex-direction: column; border-bottom: 1px solid #b5b5b5; }
.dh { height: 25px; flex: none; background: #5f8a84; color: #fff; display: flex; align-items: center; padding: 0 8px; font-size: 12px; }
.dh-gear { width: 14px; height: 14px; color: #fff; }
.dh-t { margin-left: 10px; flex: 1; }
.dh-b { width: 14px; height: 14px; margin-left: 6px; }
.dbody { flex: 1; padding: 4px 6px 0; display: flex; flex-direction: column; gap: 4px; }
.sec { background: #fff; border-bottom: 2px solid #cdcdcd; flex: none; }
.sh { height: 24px; display: flex; align-items: center; justify-content: space-between; padding: 1px 6px 0 7px; font-size: 13.500px; color: #4f93a8; }
.sh.act { background: #fdf6dc; padding-top: 0; }
.sb { padding: 6px 9px 6px; }
.pb8 .sb { padding-bottom: 8px; }
.pb9 .sb { padding-bottom: 7px; }
.row { display: flex; align-items: center; }
.r32 { height: 32px; } .r25 { height: 25px; } .r24 { height: 24px; } .r23 { height: 23px; } .r18 { height: 18px; }
.lb { font-size: 12px; color: #333; white-space: nowrap; }
.sp { flex: 1; }
.chk { width: 14px; height: 14px; margin: 0 4px 0 2px; flex: none; }
.btn { border: 1px solid #a8a8a8; display: flex; align-items: center; justify-content: center; background: #fff; flex: none; }
.b24 { width: 24px; height: 24px; }
.b32 { width: 32px; height: 32px; }
.b49 { width: 49px; height: 32px; gap: 4px; justify-content: flex-start; padding-left: 2px; }
.bi { width: 22px; height: 22px; }
.bb { width: 30px; height: 30px; }
.bp { width: 30px; height: 24px; }
.hl { width: 195px; height: 32px; background: #fdd66f; display: flex; align-items: center; }
.btn-sel { display: flex; width: 49px; height: 32px; background: #fde4a0; border: 1px solid #f2d68c; flex: none; }
.bs-m { width: 32px; display: flex; align-items: center; justify-content: center; border-right: 1px solid #f0d286; }
.bs-c { flex: 1; display: flex; align-items: center; justify-content: center; }
.sel { width: 141px; height: 100%; border: 1px solid #a8a8a8; display: flex; align-items: center; padding: 0 6px 0 4px; gap: 3px; font-size: 12px; flex: none; }
.sel .caret { margin-left: auto; }
.vi { width: 18px; height: 16px; flex: none; }
.sel.num { padding-right: 4px; }
.sel.num .n { width: 78px; line-height: 14px; }
.n.hi { background: linear-gradient(90deg, #3d8ee0 22px, transparent 22px); color: #fff; }
.sel.num .u { font-size: 13px; color: #333; }
.cb { width: 13px; height: 13px; border: 1px solid #9a9a9a; background: #eaeaea; margin-right: 5px; flex: none; box-shadow: inset 0 0 0 1px #fff; }
.cb svg { display: block; width: 11px; height: 11px; }
.cb.on { background: #e3e8f4; }
.tol { width: 82px; height: 100%; border: 1px solid #a8a8a8; padding: 0 3px 0 21px; display: flex; align-items: center; flex: none; }
.tolv { display: flex; align-items: center; white-space: pre; font: 13.500px/18px "Liberation Mono", monospace; color: #333; }
.tolv::after { content: ""; width: 1px; height: 9px; margin-left: 1px; background: #555; }
.collapse { height: 17px; display: flex; align-items: center; justify-content: center; margin-top: -4px; padding-top: 6px; border-bottom: 1px solid #d8d8d8; }
.acts { display: flex; justify-content: flex-end; gap: 5px; padding: 5px 10px 0 0; }
.pb { width: 54px; height: 25px; margin: 0; padding: 0; border: 1px solid #b0b0b0; background: #c8c9cb; font: 12px/16px "Noto Sans", "Noto Sans CJK SC", sans-serif; color: #333; }
.pb.ok { background: #8fc7e8; border-color: #3f8fc0; word-spacing: 3px; }

/* viewport */
.viewport { flex: 1; position: relative; overflow: hidden; background: linear-gradient(#adaeb0 0%, #c9cacc 35%, #dfe0e2 62%, #e6e7e9 82%, #e8e9eb 100%); }
.scene { display: block; }
.ax { font: 11px "Liberation Sans", sans-serif; }
.ax.bl { fill: #1a2bc4; } .ax.nv { fill: #1a3a7a; } .ax.gr { fill: #5f9a6a; } .ax.rd { fill: #c04848; }
.tag { position: absolute; left: 265px; top: 466px; width: 45px; height: 29px; background: #f2f6f7; border: 1px solid #aeaeae; display: flex; align-items: center; font-size: 11px; color: #222; }
.grip { width: 8px; height: 25px; margin: 0 8px 0 2px; background-image: radial-gradient(#b3b3b3 1px, transparent 1.300px); background-size: 4px 4px; flex: none; }
.tag span { margin-left: -1px; white-space: nowrap; }
.ctl { position: absolute; left: 626px; top: 207px; width: 160px; height: 32px; background: #f2f6f7; display: flex; align-items: center; font-size: 12px; color: #222; }
.ctl .grip { margin: 0 7px 0 1px; }
.cs { height: 25px; border: 1px solid #a8a8a8; background: #fff; display: flex; align-items: center; justify-content: space-between; flex: none; padding: 0 6px 0 4px; }
.c1 { width: 44px; }
.ctl-l { margin: 0 2px 0 5px; white-space: nowrap; }
.c2 { width: 61px; height: 23px; }
.wm-t { position: absolute; left: 958px; top: 750px; color: #f2f3f4; white-space: nowrap; }
.wm1 { font: bold 40px/48px "Liberation Sans", "Noto Sans CJK SC", sans-serif; letter-spacing: 2px; }
.wm2 { font: bold 12.500px/12px "Liberation Sans", sans-serif; letter-spacing: 4.500px; margin-top: -1px; }
```
